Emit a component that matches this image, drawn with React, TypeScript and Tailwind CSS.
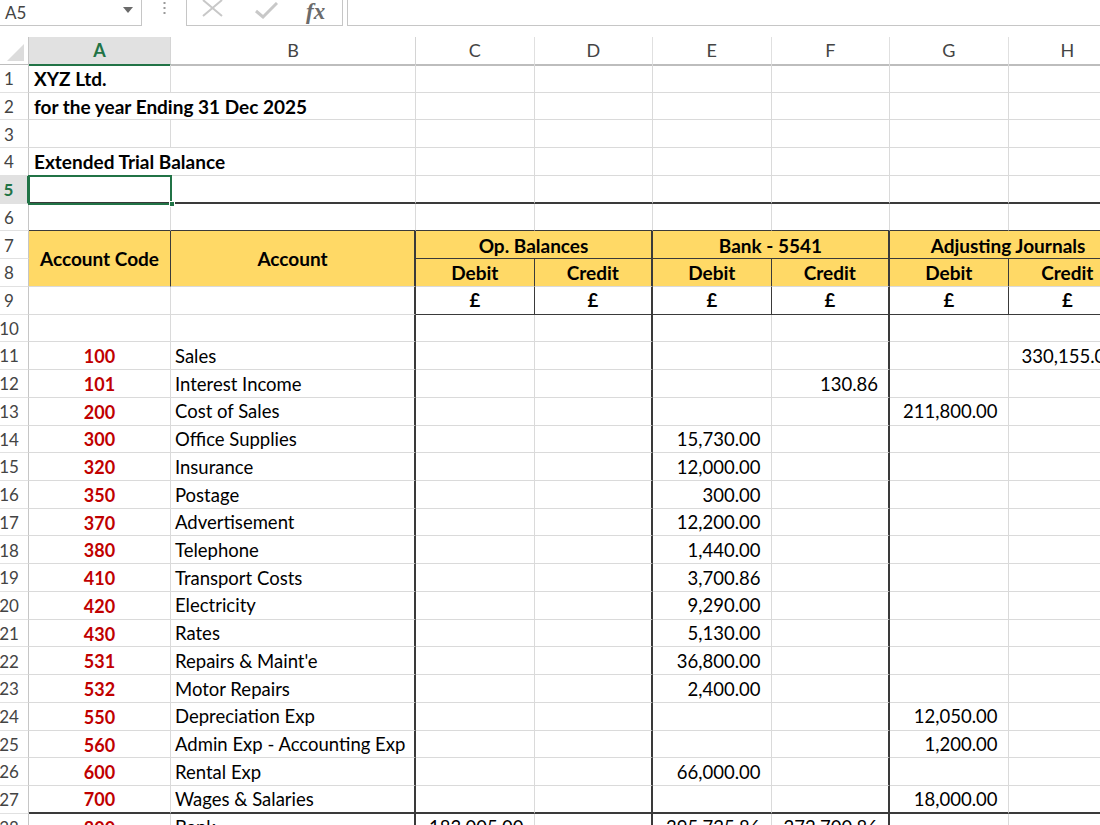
import type { ReactNode } from 'react';

type Edge = 'g' | 'd' | 'D' | 'n';
type Col = 'c' | 'd' | 'e' | 'f' | 'g' | 'h';

const rightEdge: Record<Edge, string> = {
  g: 'border-r border-r-[#dadada]',
  d: 'border-r border-r-[#3a3a3a]',
  D: 'border-r-2 border-r-[#3a3a3a]',
  n: ''
};

const bottomEdge: Record<Edge, string> = {
  g: 'border-b border-b-[#dadada]',
  d: 'border-b border-b-[#3a3a3a]',
  D: 'border-b-2 border-b-[#3a3a3a]',
  n: ''
};

const COLS = 'grid grid-cols-[29px_142px_245px_118.5px_118.5px_118.5px_118.5px_118.5px_118.5px]';

const moneyCols: Col[] = ['c', 'd', 'e', 'f', 'g', 'h'];
// column groups are split by heavier rules after D and F
const moneyRight: Record<Col, Edge> = { c: 'g', d: 'D', e: 'g', f: 'D', g: 'g', h: 'g' };

const lines: { code: string; name: string; cols: Partial<Record<Col, string>> }[] = [
  { code: '100', name: 'Sales', cols: { h: '330,155.00' } },
  { code: '101', name: 'Interest Income', cols: { f: '130.86' } },
  { code: '200', name: 'Cost of Sales', cols: { g: '211,800.00' } },
  { code: '300', name: 'Office Supplies', cols: { e: '15,730.00' } },
  { code: '320', name: 'Insurance', cols: { e: '12,000.00' } },
  { code: '350', name: 'Postage', cols: { e: '300.00' } },
  { code: '370', name: 'Advertisement', cols: { e: '12,200.00' } },
  { code: '380', name: 'Telephone', cols: { e: '1,440.00' } },
  { code: '410', name: 'Transport Costs', cols: { e: '3,700.86' } },
  { code: '420', name: 'Electricity', cols: { e: '9,290.00' } },
  { code: '430', name: 'Rates', cols: { e: '5,130.00' } },
  { code: '531', name: "Repairs & Maint'e", cols: { e: '36,800.00' } },
  { code: '532', name: 'Motor Repairs', cols: { e: '2,400.00' } },
  { code: '550', name: 'Depreciation Exp', cols: { g: '12,050.00' } },
  { code: '560', name: 'Admin Exp - Accounting Exp', cols: { g: '1,200.00' } },
  { code: '600', name: 'Rental Exp', cols: { e: '66,000.00' } },
  { code: '700', name: 'Wages & Salaries', cols: { g: '18,000.00' } },
  { code: '800', name: 'Bank', cols: { c: '183,005.00', e: '395,725.86', f: '272,700.86' } }
];

function Cell({
  r = 'g',
  b = 'g',
  className = '',
  children
}: {
  r?: Edge;
  b?: Edge;
  className?: string;
  children?: ReactNode;
}) {
  return (
    <div className={`flex min-w-0 items-center whitespace-nowrap pt-[2px] ${rightEdge[r]} ${bottomEdge[b]} ${className}`}>
      {children}
    </div>
  );
}

function RowHead({ n, active = false }: { n: number; active?: boolean }) {
  return (
    <div
      className={`flex items-center justify-center overflow-hidden whitespace-nowrap border-b border-b-[#e1e1e1] pr-[10px] pt-[1px] text-[17px] ${
        active
          ? 'border-r-2 border-r-[#217346] bg-[#e1e1e1] font-bold text-[#217346]'
          : 'border-r border-r-[#c6c6c6] bg-white text-[#444]'
      }`}
    >
      {n}
    </div>
  );
}

function FormulaBar() {
  return (
    <div className="flex h-[26px] text-[#444]">
      <div className="relative flex w-[142px] items-start border-b border-r border-[#c6c6c6] pl-[5px] text-[17px]">
        A5
        <svg className="absolute left-[123px] top-[7px]" width="10" height="6" viewBox="0 0 10 6">
          <path d="M0 0h10L5 6z" fill="#6a6a6a" />
        </svg>
      </div>
      <div className="flex w-[44px] justify-center pt-[2px]">
        <svg width="3" height="14" viewBox="0 0 3 14">
          <rect x="0.5" y="0" width="2" height="2" fill="#9a9a9a" />
          <rect x="0.5" y="5" width="2" height="2" fill="#9a9a9a" />
          <rect x="0.5" y="10" width="2" height="2" fill="#9a9a9a" />
        </svg>
      </div>
      <div className="flex w-[157px] items-start border-x border-b border-[#c6c6c6]">
        <svg className="ml-[15px]" width="21" height="17" viewBox="0 0 21 17">
          <path d="M1 0l19 16M20 0L1 16" stroke="#c8c8c8" strokeWidth="2" fill="none" />
        </svg>
        <svg className="ml-[32px] mt-[2px]" width="23" height="17" viewBox="0 0 23 17">
          <path d="M1 9l7 6L22 1" stroke="#c8c8c8" strokeWidth="3" fill="none" />
        </svg>
        <span className="ml-[28px] font-['Liberation_Serif',serif] text-[23px] font-bold italic leading-none text-[#6b6b6b]">
          fx
        </span>
      </div>
      <div className="ml-[4px] flex-1 border-b border-l border-[#c6c6c6]" />
    </div>
  );
}

function ColumnHeaders() {
  const letters = ['C', 'D', 'E', 'F', 'G', 'H'];
  return (
    <div className={`${COLS} mt-[11px] h-[28px] text-[18px] text-[#444]`}>
      <div className="relative border-b-2 border-r border-b-[#bdbdbd] border-r-[#c6c6c6] bg-white">
        <svg className="absolute bottom-[3px] right-[4px]" width="17" height="17" viewBox="0 0 17 17">
          <path d="M17 0v17H0z" fill="#dcdcdc" />
        </svg>
      </div>
      <div className="flex items-center justify-center border-b-2 border-r border-b-[#217346] border-r-[#d4d4d4] bg-[#e1e1e1] font-bold text-[#217346]">
        A
      </div>
      <div className="flex items-center justify-center border-b-2 border-r border-b-[#bdbdbd] border-r-[#d4d4d4] bg-white">
        B
      </div>
      {letters.map((l) => (
        <div
          key={l}
          className="flex items-center justify-center border-b-2 border-r border-b-[#bdbdbd] border-r-[#e0e0e0] bg-white"
        >
          {l}
        </div>
      ))}
    </div>
  );
}

function EmptyRow({ n, a, b = 'g', aRight = 'g', active = false }: { n: number; a?: string; b?: Edge; aRight?: Edge; active?: boolean }) {
  return (
    <>
      <RowHead n={n} active={active} />
      <Cell r={aRight} b={b} className="overflow-visible pl-[5px] text-[19px] font-bold">
        {a}
      </Cell>
      <Cell b={b} />
      {moneyCols.map((c) => (
        <Cell key={c} b={b} />
      ))}
    </>
  );
}

export default function App() {
  return (
    <div className="h-[825px] w-[1100px] overflow-hidden bg-white font-['Lato','Liberation_Sans',sans-serif] text-[18.5px] text-black">
      <FormulaBar />
      <ColumnHeaders />

      <div className={`${COLS} relative auto-rows-[27.74px]`}>
        <EmptyRow n={1} a="XYZ Ltd." />
        <EmptyRow n={2} a="for the year Ending 31 Dec 2025" aRight="n" />
        <EmptyRow n={3} />
        <EmptyRow n={4} a="Extended Trial Balance" aRight="n" />
        <EmptyRow n={5} b="D" active />
        <EmptyRow n={6} b="d" />

        {/* rows 7-8: yellow column titles */}
        <RowHead n={7} />
        <Cell r="d" b="g" className="row-span-2 justify-center bg-[#ffd966] text-[19px] font-bold">
          Account Code
        </Cell>
        <Cell r="D" b="g" className="row-span-2 justify-center bg-[#ffd966] text-[19px] font-bold">
          Account
        </Cell>
        <Cell r="D" b="d" className="col-span-2 justify-center bg-[#ffd966] text-[19px] font-bold">
          Op. Balances
        </Cell>
        <Cell r="D" b="d" className="col-span-2 justify-center bg-[#ffd966] text-[19px] font-bold">
          Bank - 5541
        </Cell>
        <Cell r="d" b="d" className="col-span-2 justify-center overflow-visible bg-[#ffd966] text-[19px] font-bold">
          Adjusting Journals
        </Cell>
        <RowHead n={8} />
        {moneyCols.map((c, i) => (
          <Cell key={c} r={moneyRight[c] === 'D' ? 'D' : 'd'} className="justify-center bg-[#ffd966] text-[19px] font-bold">
            {i % 2 === 0 ? 'Debit' : 'Credit'}
          </Cell>
        ))}

        {/* row 9: currency symbols */}
        <RowHead n={9} />
        <Cell />
        <Cell r="D" />
        {moneyCols.map((c) => (
          <Cell key={c} r={moneyRight[c] === 'D' ? 'D' : 'd'} b="d" className="justify-center font-bold">
            £
          </Cell>
        ))}

        <RowHead n={10} />
        <Cell />
        <Cell r="D" />
        {moneyCols.map((c) => (
          <Cell key={c} r={moneyRight[c]} />
        ))}

        {lines.map((line, i) => {
          const n = i + 11;
          const b: Edge = n === 27 ? 'D' : 'g';
          return (
            <div key={line.code} className="contents">
              <RowHead n={n} />
              <Cell b={b} className="justify-center text-[18px] font-bold text-[#c00000]">
                {line.code}
              </Cell>
              <Cell r="D" b={b} className="pl-[4px]">
                {line.name}
              </Cell>
              {moneyCols.map((c) => (
                <Cell key={c} r={moneyRight[c]} b={b} className="justify-end overflow-visible pr-[10px]">
                  {line.cols[c]}
                </Cell>
              ))}
            </div>
          );
        })}

        {/* active cell A5 */}
        <div className="pointer-events-none absolute left-[28px] top-[110px] h-[30px] w-[144px] border-2 border-[#217346]" />
        <div className="pointer-events-none absolute left-[169px] top-[136px] h-[6px] w-[6px] border border-white bg-[#217346]" />
      </div>
    </div>
  );
}
